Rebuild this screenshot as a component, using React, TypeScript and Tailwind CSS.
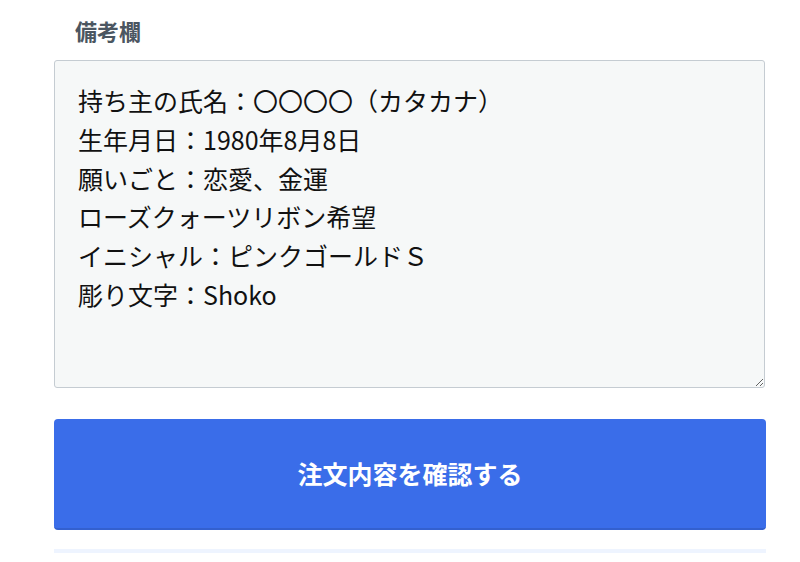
import React from "react";

const note = `持ち主の氏名：〇〇〇〇（カタカナ）
生年月日：1980年8月8日
願いごと：恋愛、金運
ローズクォーツリボン希望
イニシャル：ピンクゴールドＳ
彫り文字：Shoko`;

const App = () => {
  return (
    <div
      className="w-[800px] h-[562px] bg-white overflow-hidden"
      style={{ fontFamily: '"Noto Sans CJK JP", "Noto Sans", sans-serif' }}
    >
      <div className="ml-[54px] w-[712px] pt-[16px]">
        <label className="block pl-[21px] text-[22px] leading-[28px] font-bold text-[#4b5661]">
          備考欄
        </label>
        <textarea
          defaultValue={note}
          className="mt-[16px] block w-[711px] h-[328px] rounded-[3px] border border-[#c5ccd2] bg-[#f6f8f8] pl-[23px] pr-4 pt-[20px] text-[25px] leading-[38.8px] text-[#111]"
        />
        <button className="mt-[31px] w-[712px] h-[111px] rounded-[4px] bg-[#3a6de9] text-white text-[25px] font-bold border-b-2 border-[#3360cf]">
          注文内容を確認する
        </button>
        <div className="mt-[19px] h-[4px] bg-[#eef4ff]" />
      </div>
    </div>
  );
};

export default App;
